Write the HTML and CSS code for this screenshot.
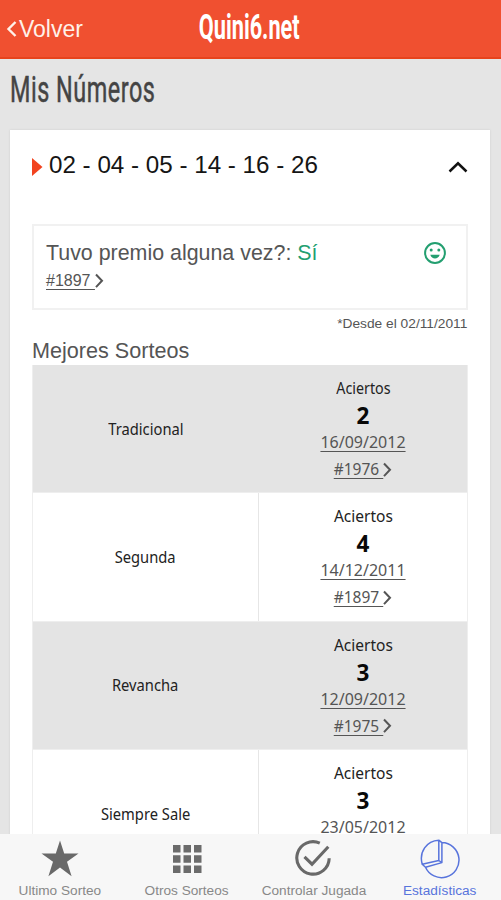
FILE: index.html
```html
<!DOCTYPE html>
<html lang="es">
<head>
<meta charset="utf-8">
<title>Quini6.net</title>
<link rel="stylesheet" href="styles.css">
</head>
<body>
<div class="app">
  <header class="topbar">
    <a class="back"><svg width="11" height="18" viewBox="0 0 11 18"><path d="M9.5 2 2.5 9 9.5 16" fill="none" stroke="currentColor" stroke-width="2.4"/></svg><span>Volver</span></a>
    <div class="brand"><span>Quini6.net</span></div>
  </header>
  <main class="content">
    <h1><span>Mis Números</span></h1>
    <section class="card">
      <div class="play">
        <svg width="11" height="18" viewBox="0 0 11 18"><path d="M0 0 10.5 9 0 18Z" fill="#f2431f"/></svg>
        <span class="numbers">02 - 04 - 05 - 14 - 16 - 26</span>
        <svg class="up" width="20" height="12" viewBox="0 0 20 12"><path d="M1.5 10.5 10 2.3l8.5 8.2" fill="none" stroke="#111" stroke-width="2.5"/></svg>
      </div>
      <div class="prize">
        <div class="question">Tuvo premio alguna vez?: <span class="yes">Sí</span></div>
        <div class="link"><u>#1897&nbsp;</u><svg width="9" height="16" viewBox="0 0 9 16"><path d="m1 1.5 6 6.3-6 6.3" fill="none" stroke="currentColor" stroke-width="2"/></svg></div>
        <svg class="smile" width="24" height="24" viewBox="0 0 24 24"><circle cx="12" cy="12" r="9.9" fill="none" stroke="#239f70" stroke-width="2"/><circle cx="8.2" cy="9" r="1.5" fill="#239f70"/><circle cx="15.8" cy="9" r="1.5" fill="#239f70"/><path d="M7.3 13.7h9.4c-.8 2.5-2.6 3.8-4.7 3.8s-3.9-1.3-4.7-3.8Z" fill="#239f70"/></svg>
      </div>
      <div class="since"><span>*Desde el 02/11/2011</span></div>
      <h2>Mejores Sorteos</h2>
      <div class="table">
        <div class="row shaded">
          <div class="name"><span>Tradicional</span></div>
          <div class="hits"><span class="label">Aciertos</span><b>2</b><u class="date">16/09/2012</u><span class="link"><u>#1976&nbsp;</u><svg width="9" height="16" viewBox="0 0 9 16"><path d="m1 1.5 6 6.3-6 6.3" fill="none" stroke="currentColor" stroke-width="2"/></svg></span></div>
        </div>
        <div class="row">
          <div class="name"><span>Segunda</span></div>
          <div class="hits"><span class="label wide">Aciertos</span><b>4</b><u class="date">14/12/2011</u><span class="link"><u>#1897&nbsp;</u><svg width="9" height="16" viewBox="0 0 9 16"><path d="m1 1.5 6 6.3-6 6.3" fill="none" stroke="currentColor" stroke-width="2"/></svg></span></div>
        </div>
        <div class="row shaded">
          <div class="name"><span>Revancha</span></div>
          <div class="hits"><span class="label wide">Aciertos</span><b>3</b><u class="date">12/09/2012</u><span class="link"><u>#1975&nbsp;</u><svg width="9" height="16" viewBox="0 0 9 16"><path d="m1 1.5 6 6.3-6 6.3" fill="none" stroke="currentColor" stroke-width="2"/></svg></span></div>
        </div>
        <div class="row">
          <div class="name"><span>Siempre Sale</span></div>
          <div class="hits"><span class="label wide">Aciertos</span><b>3</b><span class="date">23/05/2012</span></div>
        </div>
      </div>
    </section>
  </main>
  <nav class="tabs">
    <a><svg width="40" height="40" viewBox="0 0 40 40"><path d="m20 1.5 4.2 13.1H38.5L27 22.8l4.6 14.4L20 28.5 8.4 37.2 13 22.8 1.5 14.6h14.3Z" fill="#696969"/></svg><span>Ultimo Sorteo</span></a>
    <a><svg width="40" height="40" viewBox="0 0 40 40"><path d="M6 6h7.5v7.5H6zM16.5 6H24v7.5h-7.5zM27 6h7.5v7.5H27zM6 16.2h7.5v7.5H6zM16.5 16.2H24v7.5h-7.5zM27 16.2h7.5v7.5H27zM6 26.4h7.5v7.5H6zM16.5 26.4H24v7.5h-7.5zM27 26.4h7.5v7.5H27z" fill="#6b6b6b"/></svg><span>Otros Sorteos</span></a>
    <a><svg width="40" height="40" viewBox="0 0 40 40"><path d="M26.8 4.2A16.2 16.2 0 1 0 36.2 19.2M11.5 17.8l7.5 7.4L35.3 7.8" fill="none" stroke="#696969" stroke-width="3.1"/></svg><span>Controlar Jugada</span></a>
    <a class="active"><svg width="40" height="40" viewBox="0 0 40 40"><path d="M18.8 1.2v20.3L2.2 25.2C-1.2 13 6.5 1.8 18.8 1.2ZM18.8 1.2l3.1 2.4v20L5.5 28.2l-3.3-3M18.8 21.5l3.1 2.1M21.9 3.6A17.5 17.5 0 1 1 5.5 28.2" fill="none" stroke="#5874dc" stroke-width="1.5" stroke-linejoin="round"/></svg><span>Estadísticas</span></a>
  </nav>
</div>
</body>
</html>
```
FILE: styles.css
```css
* { box-sizing: border-box; }
body { margin: 0; background: #e5e5e5; font-family: "Liberation Sans", sans-serif; color: #555; }
.app { width: 501px; height: 900px; overflow: hidden; display: flex; flex-direction: column; }
svg { display: block; flex: none; }
.topbar { height: 59px; flex: none; background: #f05030; border-bottom: 2px solid #e7431c; color: #fff; display: grid; grid-template-columns: 1fr auto 1fr; }
.back { display: flex; align-items: center; padding: 1px 0 0 6px; font-size: 23px; color: #fff1e9; gap: 2px; }
.brand { width: 101px; display: flex; justify-content: center; font: bold 35px/56px Roboto, sans-serif; }
.brand span { transform: translateX(-1px) scaleX(.62); }
.content { flex: 1; min-height: 0; padding: 0 11px 0 10px; overflow: hidden; }
h1 { margin: 0; height: 71px; font: 400 36px/63px Roboto, sans-serif; color: #444; -webkit-text-stroke: .5px #444; }
h1 span { display: inline-block; transform: scaleX(.65); transform-origin: left; letter-spacing: .8px; }
.card { background: #fff; height: 900px; padding: 0 22px; box-shadow: 0 0 2px #ccc; }
.play { height: 94px; display: flex; align-items: flex-start; padding-top: 26px; color: #151515; }
.play > svg { margin-top: 2px; }
.numbers { margin-left: 6px; font-size: 24.2px; line-height: 18px; white-space: nowrap; }
.play .up { margin: 5px 0 0 auto; }
.prize { position: relative; height: 86px; border: 2px solid #f1f1f1; padding: 13px 12px; }
.question { font-size: 21.4px; line-height: 28px; white-space: nowrap; }
.yes { color: #239f70; }
.link { display: flex; align-items: center; color: #555; }
.prize .link { font-size: 16px; line-height: 28px; }
u { text-underline-offset: 3px; text-decoration-thickness: 1px; }
.smile { position: absolute; right: 19px; top: 15px; }
.since { height: 30px; font-size: 12.5px; line-height: 29px; text-align: right; }
.since span { display: inline-block; transform: translateX(-1px) scaleX(1.1); transform-origin: right; }
h2 { margin: 0; height: 25px; font-size: 21.6px; line-height: 22px; font-weight: 400; }
.table { font-family: "Noto Sans", sans-serif; border: solid #eee; border-width: 0 1px; }
.row { height: 128.4px; display: grid; grid-template-columns: 226px 1fr; border-bottom: 1px solid #eee; color: #222; }
.shaded { background: #e4e4e4; }
.name { display: flex; justify-content: center; align-items: center; border-right: 1px solid #e6e6e6; font-size: 16px; }
.name span { transform: scaleX(.92); }
.shaded .name { border-color: transparent; }
.hits { display: flex; flex-direction: column; align-items: center; padding-top: 10px; font-size: 16px; line-height: 27px; }
.label { font-size: 15.5px; transform: scaleX(.92); }
.wide { font-size: 16px; transform: scaleX(.97); }
.hits b { font-size: 22.5px; color: #080808; }
.date, .hits .link { color: #555; }
.hits .link u { font-size: 15.5px; }
.tabs { height: 66px; flex: none; background: #f7f7f7; display: grid; grid-template-columns: repeat(4, 126.6px); margin: 0 0 0 -3px; position: relative; }
.tabs a { display: flex; flex-direction: column; align-items: center; padding-top: 5px; font-size: 12.5px; line-height: 24px; color: #888; white-space: nowrap; }
.tabs span { transform: scaleX(1.09); }
.tabs .active { color: #5874dc; }
```
